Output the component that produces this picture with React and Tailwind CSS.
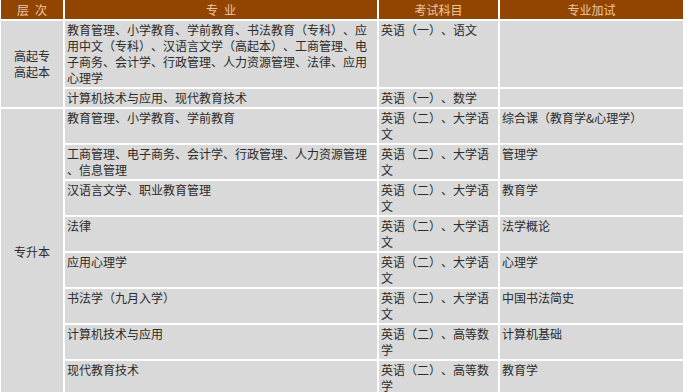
import React from 'react';

const font = { fontFamily: '"Noto Sans CJK SC", "Microsoft YaHei", sans-serif' };

const upperRows = [
  {
    major: [
      '教育管理、小学教育、学前教育、书法教育（专科）、应',
      '用中文（专科）、汉语言文学（高起本）、工商管理、电',
      '子商务、会计学、行政管理、人力资源管理、法律、应用',
      '心理学',
    ],
    exam: ['英语（一）、语文'],
    extra: '',
  },
  { major: ['计算机技术与应用、现代教育技术'], exam: ['英语（一）、数学'], extra: '' },
];

const lowerRows = [
  { major: ['教育管理、小学教育、学前教育'], exam: ['英语（二）、大学语', '文'], extra: '综合课（教育学&心理学）' },
  { major: ['工商管理、电子商务、会计学、行政管理、人力资源管理', '、信息管理'], exam: ['英语（二）、大学语', '文'], extra: '管理学' },
  { major: ['汉语言文学、职业教育管理'], exam: ['英语（二）、大学语', '文'], extra: '教育学' },
  { major: ['法律'], exam: ['英语（二）、大学语', '文'], extra: '法学概论' },
  { major: ['应用心理学'], exam: ['英语（二）、大学语', '文'], extra: '心理学' },
  { major: ['书法学（九月入学）'], exam: ['英语（二）、大学语', '文'], extra: '中国书法简史' },
  { major: ['计算机技术与应用'], exam: ['英语（二）、高等数', '学'], extra: '计算机基础' },
  { major: ['现代教育技术'], exam: ['英语（二）、高等数', '学'], extra: '教育学' },
];

const Lines = ({ lines }) =>
  lines.map((l, i) => (
    <React.Fragment key={i}>
      {i > 0 && <br />}
      {l}
    </React.Fragment>
  ));

const cell = 'bg-[#d9d9d9] align-top px-[2px] py-[1px]';

const Row = ({ row, level }) => (
  <tr>
    {level}
    <td className={cell}><Lines lines={row.major} /></td>
    <td className={cell}><Lines lines={row.exam} /></td>
    <td className={cell}>{row.extra}</td>
  </tr>
);

export default function App() {
  return (
    <div className="w-[690px] h-[392px] overflow-hidden bg-white" style={font}>
      <table className="table-fixed border-separate border-spacing-[2px] ml-[-1px] mt-[-2px] text-[12px] leading-[16px] text-[#2b2b2b] [text-spacing-trim:space-all]">
        <colgroup>
          <col className="w-[62px]" />
          <col className="w-[312px]" />
          <col className="w-[119px]" />
          <col className="w-[183px]" />
        </colgroup>
        <thead>
          <tr className="bg-[#924500] text-[#f0c8a0]">
            <th className="font-normal text-center h-[19px] py-[1px]">层{'\u2002'}次</th>
            <th className="font-normal text-center py-[1px]">专{'\u2002'}业</th>
            <th className="font-normal text-center py-[1px]">考试科目</th>
            <th className="font-normal text-center py-[1px]">专业加试</th>
          </tr>
        </thead>
        <tbody>
          {upperRows.map((r, i) => (
            <Row
              key={i}
              row={r}
              level={
                i === 0 ? (
                  <td rowSpan={2} className="bg-[#d9d9d9] text-center align-middle">
                    高起专<br />高起本
                  </td>
                ) : null
              }
            />
          ))}
          {lowerRows.map((r, i) => (
            <Row
              key={i}
              row={r}
              level={
                i === 0 ? (
                  <td rowSpan={8} className="bg-[#d9d9d9] text-center align-middle">
                    专升本
                  </td>
                ) : null
              }
            />
          ))}
        </tbody>
      </table>
    </div>
  );
}
